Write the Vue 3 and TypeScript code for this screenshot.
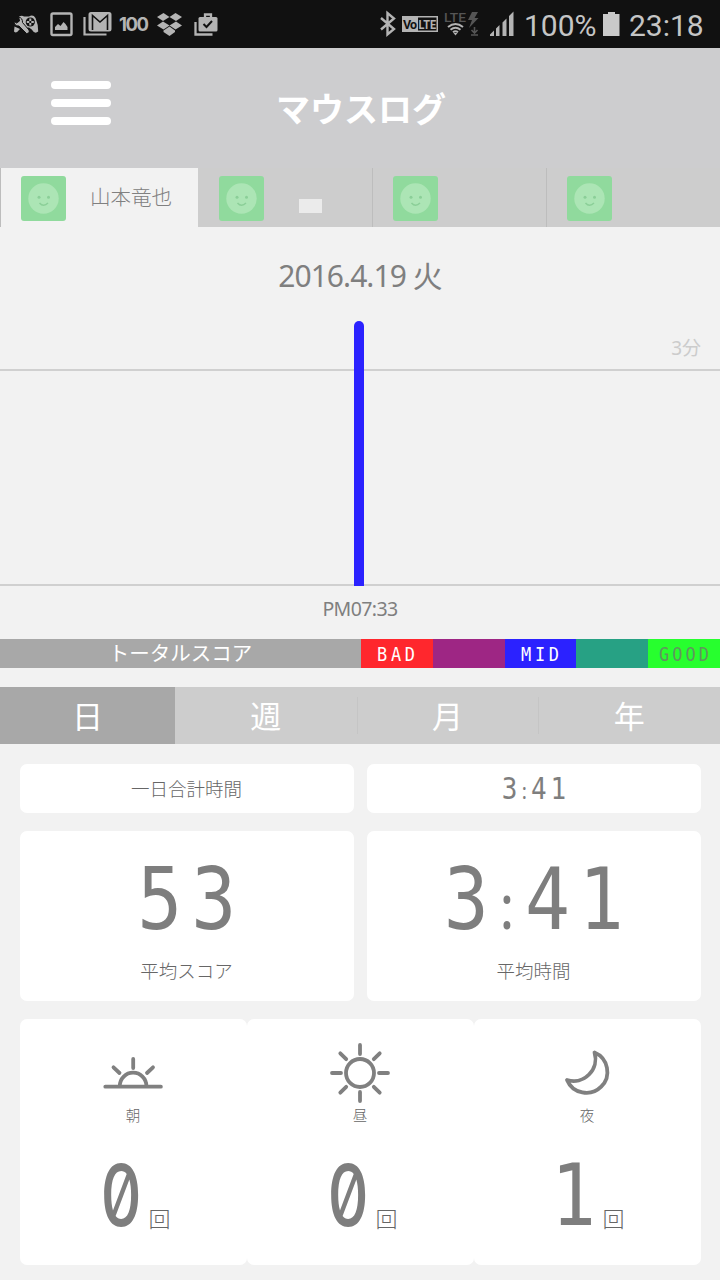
<script setup lang="ts">
interface Tab { name: string; active: boolean; patch: boolean }
interface Daypart { label: string; count: string; icon: 'morning' | 'noon' | 'night' }

const tabs: Tab[] = [
  { name: '山本竜也', active: true, patch: false },
  { name: '', active: false, patch: true },
  { name: '', active: false, patch: false },
  { name: '', active: false, patch: false },
]
const scores = [
  { text: 'BAD', kind: 'bad' },
  { text: '', kind: 'low' },
  { text: 'MID', kind: 'mid' },
  { text: '', kind: 'high' },
  { text: 'GOOD', kind: 'good' },
]
const periods = ['日', '週', '月', '年']
const dayparts: Daypart[] = [
  { label: '朝', count: '0', icon: 'morning' },
  { label: '昼', count: '0', icon: 'noon' },
  { label: '夜', count: '1', icon: 'night' },
]
</script>

<template>
  <div class="screen">
    <div class="status">
      <svg class="status-left" width="230" height="48" viewBox="0 0 230 48">
        <path d="M19 16.500q3-1.500 5 0h5q4-2.500 6.500 1.500 3 7 2.700 13.500-3.500 3-6.500-2l-2.700-2-5 .5z" fill="#b4b4b4" />
        <circle cx="30.300" cy="22" r="4.600" fill="#111" />
        <path d="M30.300 18.500v2.500M30.300 23v2.500M26.800 22h2.500M31.300 22h2.500" stroke="#b4b4b4" stroke-width="2" />
        <path d="M14.500 26.500l-.5 5q2.500 2.500 5-1.500l1-1z" fill="#b4b4b4" />
        <path d="M13 20.500l3.500 2.500 3-2-.8-4q4 1 3.800 5.500l6.500 7.500q1 3.500-2.500 3.500l-7.500-7.500q-5 .5-5-5.500z" fill="#b4b4b4" stroke="#111" stroke-width="1" />
        <rect x="51.500" y="13.500" width="20" height="21.500" rx="1.500" fill="none" stroke="#b4b4b4" stroke-width="2.400" />
        <path d="M55 30v-3l3-3 2.500 2 3-4 2 2 2 3v3z" fill="#b4b4b4" />
        <path d="M84.500 17v17.500H106.500" fill="none" stroke="#b4b4b4" stroke-width="2.200" />
        <rect x="89.500" y="13" width="21" height="17.500" rx="1.500" fill="#b4b4b4" stroke="#b4b4b4" stroke-width="2" />
        <path d="M92.500 30V15.500l7.500 6.500 7.500-6.500V30" fill="none" stroke="#111" stroke-width="1.600" />
        <g fill="#b4b4b4">
          <path d="M163.500 13l6 4-6.500 4-6-4zM175.500 13l6.500 4-6 4-6.500-4zM163 21.500l6.500 4-6 4-6.500-4zM176 21.500l6 4-6.500 4-6-4zM169.500 26.500l5.500 4v1.500l-5.500 4-6-4v-1.500z" />
          <rect x="198.500" y="17" width="19" height="14.500" rx="1.500" />
        </g>
        <path d="M195.500 22v12.500h17M205 17v-2.500h6V17" fill="none" stroke="#b4b4b4" stroke-width="2.300" />
        <path d="M203.500 24l3 3 5.500-6" fill="none" stroke="#111" stroke-width="2" />
      </svg>
      <span class="badge-hundred">100</span>
      <svg class="status-right" width="150" height="48" viewBox="370 0 150 48">
        <path d="M381 18l13 11-6.500 5.500V13L394 18.500 381 29.500" fill="none" stroke="#b4b4b4" stroke-width="2.400" />
        <rect x="402" y="16" width="36" height="16" fill="#b4b4b4" />
        <rect x="418" y="17.500" width="18.500" height="13" fill="#111" />
        <text x="403" y="28.500" font-size="12.500" font-weight="700" fill="#111" textLength="14">Vo</text>
        <text x="418.500" y="28.500" font-size="12.500" font-weight="700" fill="#b4b4b4" textLength="17.500" lengthAdjust="spacingAndGlyphs">LTE</text>
        <text x="444" y="22" font-size="13" fill="#555" font-weight="500" textLength="22" lengthAdjust="spacingAndGlyphs">LTE</text>
        <path d="M472 12h6l-3.500 6h4L469 28l3-8h-4z" fill="#555" />
        <path d="M474.500 27v6m-3-3l3 3 3-3M471 35h7" fill="none" stroke="#555" stroke-width="1.600" />
        <g fill="none" stroke="#b4b4b4" stroke-width="2">
          <path d="M448 27q7.500-6 15 0M450.500 29.800q5-4 10 0M453 32.300q2.500-2 5 0" />
        </g>
        <path d="M453.500 33h4l-2 2.500z" fill="#b4b4b4" />
        <path d="M490 36v-1.500l4-4V36zM496 28.500l3.500-3.500v11H496zM502.500 22.500l4-4V36h-4zM509 16l4.500-4.500V36H509z" fill="#b4b4b4" />
      </svg>
      <span class="percent">100%</span>
      <svg class="battery" width="17" height="24" viewBox="0 0 17 24"><path d="M0 2h5V0h7v2h4.500v22H0z" fill="#c9c9c9" /></svg>
      <span class="clock">23:18</span>
    </div>

    <header class="header">
      <div class="menu"><i></i><i></i><i></i></div>
      <h1>マウスログ</h1>
    </header>

    <nav class="tabs">
      <div v-for="(tab, i) in tabs" :key="i" class="tab" :class="{ active: tab.active }">
        <svg class="avatar" width="45" height="45" viewBox="0 0 45 45">
          <rect width="45" height="45" rx="3" fill="#90da9d" />
          <circle cx="22.500" cy="22.500" r="15.200" fill="#ace5b5" />
          <circle cx="18" cy="21.300" r="1.500" fill="#8bcf98" />
          <circle cx="27.500" cy="21.300" r="1.500" fill="#8bcf98" />
          <path d="M18.500 27q4 4.500 8.500 0" fill="none" stroke="#8bcf98" stroke-width="1.500" />
        </svg>
        <span v-if="tab.name" class="tab-name">{{ tab.name }}</span>
        <i v-if="tab.patch" class="patch"></i>
      </div>
    </nav>

    <section class="chart">
      <div class="date">2016.4.19 火</div>
      <div class="plot">
        <div class="limit">3分</div>
        <div class="area"></div>
        <div class="bar"></div>
      </div>
      <div class="time">PM07:33</div>
    </section>

    <div class="scale">
      <div class="scale-title">トータルスコア</div>
      <div v-for="s in scores" :key="s.kind" class="score" :class="s.kind"><span>{{ s.text }}</span></div>
    </div>

    <nav class="periods">
      <div v-for="(p, i) in periods" :key="p" class="period" :class="{ active: i === 0 }">{{ p }}</div>
    </nav>

    <main class="cards">
      <div class="row total">
        <div class="card label">一日合計時間</div>
        <div class="card"><span class="digits small">3<span class="colon">:</span>41</span></div>
      </div>
      <div class="row average">
        <div class="card">
          <span class="digits">53</span>
          <span class="label">平均スコア</span>
        </div>
        <div class="card">
          <span class="digits">3<span class="colon">:</span>41</span>
          <span class="label">平均時間</span>
        </div>
      </div>
      <div class="row parts">
        <div v-for="d in dayparts" :key="d.icon" class="card">
          <svg class="part-icon" width="62" height="62" viewBox="0 0 62 62" fill="none" stroke="#808080" stroke-width="3.800" stroke-linecap="round" stroke-linejoin="round">
            <path v-if="d.icon === 'morning'" d="M3.300 44.700h55.600M17.800 44a13.300 13.300 0 0 1 26.600 0M31.200 17v9M11.500 25.300l6 5.700M51 25.300L45 31" />
            <template v-else-if="d.icon === 'noon'">
              <circle cx="31" cy="31" r="14" />
              <path d="M31 3v9M31 50v9M3 31h9M50 31h9M11.300 11.300l5.900 5.900M50.700 11.300l-5.900 5.900M11.300 50.700l5.900-5.900M50.700 50.700l-5.900-5.900" />
            </template>
            <path v-else d="M38.500 10.500A21 21 0 1 1 11 38A22 22 0 0 0 38.500 10.500Z" />
          </svg>
          <span class="part-label">{{ d.label }}</span>
          <div class="count">
            <span class="digits" :class="{ zero: d.count === '0' }">{{ d.count }}</span>
            <span class="unit">回</span>
          </div>
        </div>
      </div>
    </main>
  </div>
</template>

<style>
body { margin: 0; background: #f2f2f2; }
</style>

<style scoped>
* { box-sizing: border-box; }
.screen { width: 720px; height: 1280px; overflow: hidden; background: #f2f2f2; color: #7f7f7f; font-family: "Noto Sans", "Noto Sans CJK JP", sans-serif; }
.status { position: relative; height: 48px; background: #111; color: #c5c5c5; font-family: Roboto, sans-serif; display: flex; align-items: center; }
.status-left { flex: none; }
.status-right { flex: none; margin-left: 140px; }
.status-right text { font-family: Roboto, sans-serif; }
.badge-hundred { position: absolute; left: 119px; top: 12px; font: 700 18.5px/24px Inter, sans-serif; letter-spacing: -1.5px; color: #b4b4b4; }
.percent { width: 78px; padding-left: 4px; font-size: 30px; line-height: 36px; margin-top: 3px; white-space: nowrap; }
.battery { flex: none; margin-left: 5px; }
.clock { margin: 3px 0 0 9px; font-size: 30px; line-height: 36px; }
.header { height: 120px; background: #cdcdcf; display: flex; }
.menu { width: 60px; margin: 33px 0 0 51px; display: flex; flex-direction: column; gap: 10px; }
.menu i { height: 8px; border-radius: 4px; background: #fff; }
h1 { margin: 36px 0 0 165px; color: #fff; font-size: 34px; line-height: 50px; font-weight: 700; }
.tabs { height: 59px; display: flex; background: #cdcdcd; }
.tab { width: 174px; border-left: 1px solid #bdbdbd; padding: 8px 0 0 20px; display: flex; }
.tab.active { width: 198px; background: #f2f2f2; }
.tab:nth-child(2) { border-color: #cdcdcd; }
.avatar { flex: none; }
.tab-name { margin-left: 24px; font-size: 20.5px; line-height: 42px; font-weight: 300; color: #808080; }
.patch { width: 23px; height: 14px; margin: 23px 0 0 35px; background: #ebebeb; }
.chart { height: 412px; text-align: center; }
.date { height: 94px; padding-top: 28px; font-size: 30px; line-height: 42px; letter-spacing: -.95px; }
.date, .time { white-space: nowrap; }
.plot { height: 265px; position: relative; }
.limit { height: 50px; padding: 14px 19px 0 0; text-align: right; font-size: 19px; line-height: 26px; color: #ccc; border-bottom: 2px solid #d0d0d0; }
.area { height: 215px; border-bottom: 2px solid #d0d0d0; }
.bar { position: absolute; left: 354.4px; top: 0; width: 10px; height: 265px; border-radius: 5px 5px 0 0; background: #2b22ff; }
.time { font-size: 19.5px; line-height: 28px; margin-top: 9px; letter-spacing: -.6px; }
.scale { height: 29px; display: flex; color: #fff; }
.scale-title { width: 361px; background: #a8a8a8; text-align: center; font-size: 20.5px; line-height: 29px; }
.score { flex: 1; font: 19.5px/31px "DejaVu Sans Mono", monospace; letter-spacing: 4.2px; text-align: center; }
.score span { display: inline-block; transform: scaleX(.87); margin: 0 -9px 0 -7px; }
.bad { background: #ff272d; }
.low { background: #9e2684; }
.mid { background: #2b22ff; }
.high { background: #27a184; }
.good { background: #27ff2e; color: #60965f; }
.good { letter-spacing: 3.5px; }
.periods { height: 57px; margin-top: 19px; display: flex; background: #cdcdcd; color: #fff; font-size: 31px; line-height: 59px; text-align: center; }
.period { width: 182px; position: relative; }
.period.active { width: 175px; background: #a8a8a8; }
.period:nth-child(n+3)::before { content: ""; position: absolute; left: 0; top: 10px; width: 1px; height: 37px; background: #c5c5c5; }
.cards { padding: 20px 19.5px 0; }
.row { display: flex; gap: 13px; margin-bottom: 18px; }
.card { flex: 1; background: #fff; border-radius: 7px; display: flex; flex-direction: column; align-items: center; }
.label { font-size: 18.5px; line-height: 26px; font-weight: 300; color: #666; }
.total .card { height: 49px; justify-content: center; }
.average .card { height: 170px; }
.digits { display: block; font: 85px/100px "DejaVu Sans Mono", monospace; letter-spacing: 10px; transform: scaleX(.88); margin: 19px -9px 0 0; color: #7e7e7e; }
.colon { display: inline-block; width: 31px; font-family: "Noto Sans", sans-serif; font-size: .74em; line-height: 1; letter-spacing: 0; text-indent: 2px; text-align: left; }
.digits.small { font-size: 29.5px; line-height: 36px; letter-spacing: 4.2px; margin: 0 -4px 0 0; }
.small .colon { width: 11.5px; text-indent: .8px; }
.average .label { margin-top: 8px; }
.parts { gap: 0; margin: 0; }
.parts .card { height: 246px; }
.part-icon { margin-top: 23px; }
.part-label { font-size: 14.5px; line-height: 20px; font-weight: 300; margin-top: 1px; color: #666; }
.count { width: 227px; height: 120px; display: flex; padding-left: 74px; }
.count .digits { width: 52px; margin: 21px 0 0; letter-spacing: 0; }
.count .zero { font-family: Inter, sans-serif; font-weight: 500; font-feature-settings: "zero", "tnum"; transform: scaleX(.76); }
.unit { margin: 77px 0 0 3px; font-size: 22px; line-height: 32px; font-weight: 300; color: #666; }
</style>
